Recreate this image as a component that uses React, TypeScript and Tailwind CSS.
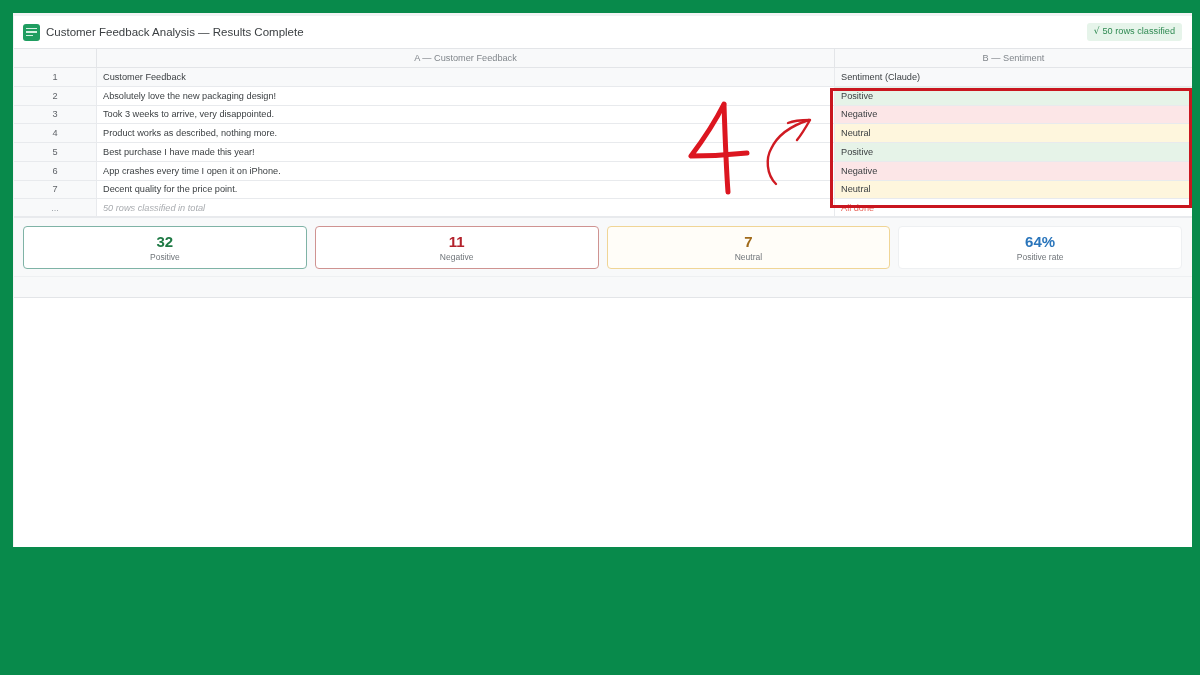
const rows = [
  ["1", "Customer Feedback", "Sentiment (Claude)", "head"],
  ["2", "Absolutely love the new packaging design!", "Positive", "pos"],
  ["3", "Took 3 weeks to arrive, very disappointed.", "Negative", "neg"],
  ["4", "Product works as described, nothing more.", "Neutral", "neu"],
  ["5", "Best purchase I have made this year!", "Positive", "pos"],
  ["6", "App crashes every time I open it on iPhone.", "Negative", "neg"],
  ["7", "Decent quality for the price point.", "Neutral", "neu"],
];

const bClass: Record<string, string> = {
  head: "bg-[#f8f9fa]",
  pos: "bg-[#e6f3e8]",
  neg: "bg-[#fce6e7]",
  neu: "bg-[#fef6dd]",
};

const cards = [
  { n: "32", l: "Positive", b: "border-[#7fb3a6]", c: "text-[#1f7a45]", bg: "bg-white" },
  { n: "11", l: "Negative", b: "border-[#cf9391]", c: "text-[#b3222c]", bg: "bg-white" },
  { n: "7", l: "Neutral", b: "border-[#f0d596]", c: "text-[#a06a1a]", bg: "bg-[#fffdf8]" },
  { n: "64%", l: "Positive rate", b: "border-[#eef0f2]", c: "text-[#2a75bb]", bg: "bg-white" },
];

export default function App() {
  return (
    <div className="relative w-[1200px] h-[675px] overflow-hidden bg-[#088a4b] pt-[13px] pl-[13px] font-['Liberation_Sans',Arial,sans-serif]">
      <div className="w-[1179px] h-[534px] bg-white border-t-[3px] border-l border-[#f1f3f4] flex flex-col blur-[0.35px]">
        <div className="h-[33px] flex items-center justify-between pl-[9px] pr-[10px] border-b border-[#e3e5e8] shrink-0">
          <div className="flex items-center gap-[6px]">
            <div className="w-[17px] h-[17px] rounded-[3px] bg-[#1f9d60] flex flex-col justify-center items-start gap-[2px] pl-[3px]">
              <span className="block w-[11px] h-[1.5px] bg-[#d5f0e2]" />
              <span className="block w-[11px] h-[1.5px] bg-[#d5f0e2]" />
              <span className="block w-[7px] h-[1.5px] bg-[#d5f0e2]" />
            </div>
            <span className="text-[11.5px] leading-none text-[#3c4043] pt-[1px]">Customer Feedback Analysis — Results Complete</span>
          </div>
          <span className="h-[18px] flex items-center pl-[7px] pr-[7px] rounded-[3px] bg-[#e6f4ea] text-[9.2px] text-[#2f8a52] gap-[3px]"><span className="font-['DejaVu_Sans',sans-serif] text-[9px]">√</span>50 rows classified</span>
        </div>

        <div className="grid grid-cols-[83px_738px_357px] text-[9.2px] leading-none text-[#3c4043] shrink-0">
          <div className="h-[19px] bg-[#f8f9fa] border-b border-r border-[#e3e5e8]" />
          <div className="h-[19px] bg-[#f8f9fa] border-b border-r border-[#e3e5e8] flex items-center justify-center text-[#80868b] pt-[1px]">A — Customer Feedback</div>
          <div className="h-[19px] bg-[#f8f9fa] border-b border-[#e3e5e8] flex items-center justify-center text-[#80868b] pt-[1px]">B — Sentiment</div>
          {rows.map(([num, a, b, kind]) => (
            <div key={num} className="contents">
              <div className="h-[18.75px] pt-[1px] bg-[#f8f9fa] border-b border-r border-[#e8eaed] flex items-center justify-center text-[#5f6368]">{num}</div>
              <div className={`h-[18.75px] pt-[1px] border-b border-r border-[#e8eaed] flex items-center pl-[6px] ${kind === "head" ? "bg-[#f8f9fa]" : "bg-white"}`}>{a}</div>
              <div className={`h-[18.75px] pt-[1px] border-b border-[#e8eaed] flex items-center pl-[6px] ${bClass[kind]}`}>{b}</div>
            </div>
          ))}
          <div className="h-[18.75px] pt-[1px] bg-[#f8f9fa] border-b-2 border-r border-[#e8eaed] flex items-center justify-center text-[#9aa0a6]">...</div>
          <div className="h-[18.75px] pt-[1px] bg-white border-b-2 border-r border-[#e8eaed] flex items-center pl-[6px] italic text-[#a9acb0]">50 rows classified in total</div>
          <div className="h-[18.75px] pt-[1px] bg-white border-b-2 border-[#e8eaed] flex items-center pl-[6px] text-[#ea6a60]">All done</div>
        </div>

        <div className="bg-[#f8f9fa] pl-[9px] pr-[10px] pt-[8px] pb-[7px] grid grid-cols-4 gap-[8px] border-b border-[#eef0f2] shrink-0">
          {cards.map((c) => (
            <div key={c.l} className={`h-[43px] rounded-[4px] border-[1.5px] flex flex-col items-center justify-center ${c.b} ${c.bg}`}>
              <span className={`text-[15px] leading-[18px] font-bold ${c.c}`}>{c.n}</span>
              <span className="text-[8.5px] leading-[12px] text-[#70757a]">{c.l}</span>
            </div>
          ))}
        </div>

        <div className="h-[21px] bg-[#f8f9fa] border-b border-[#e3e5e8] shrink-0" />
      </div>

      <div className="absolute left-[830px] top-[87.5px] w-[362px] h-[120.5px] border-[3.5px] border-[#c9161f]" />
      <svg className="absolute left-[680px] top-[95px]" width="140" height="105" viewBox="680 95 140 105" fill="none">
        <path d="M724 104 C717 118 703 140 691 156 C708 156 728 155 747 153" stroke="#dc1620" strokeWidth="5" strokeLinecap="round" strokeLinejoin="round" />
        <path d="M724 105 C725 135 726 165 728 192" stroke="#dc1620" strokeWidth="5" strokeLinecap="round" />
        <path d="M776 184 C766 174 766 158 771 149 C777 136 790 126 809 120" stroke="#cf1a22" strokeWidth="2.4" strokeLinecap="round" />
        <path d="M788 123 C795 120 802 120 810 120 C806 127 802 134 797 140" stroke="#cf1a22" strokeWidth="2.4" strokeLinecap="round" strokeLinejoin="round" />
      </svg>
    </div>
  );
}
